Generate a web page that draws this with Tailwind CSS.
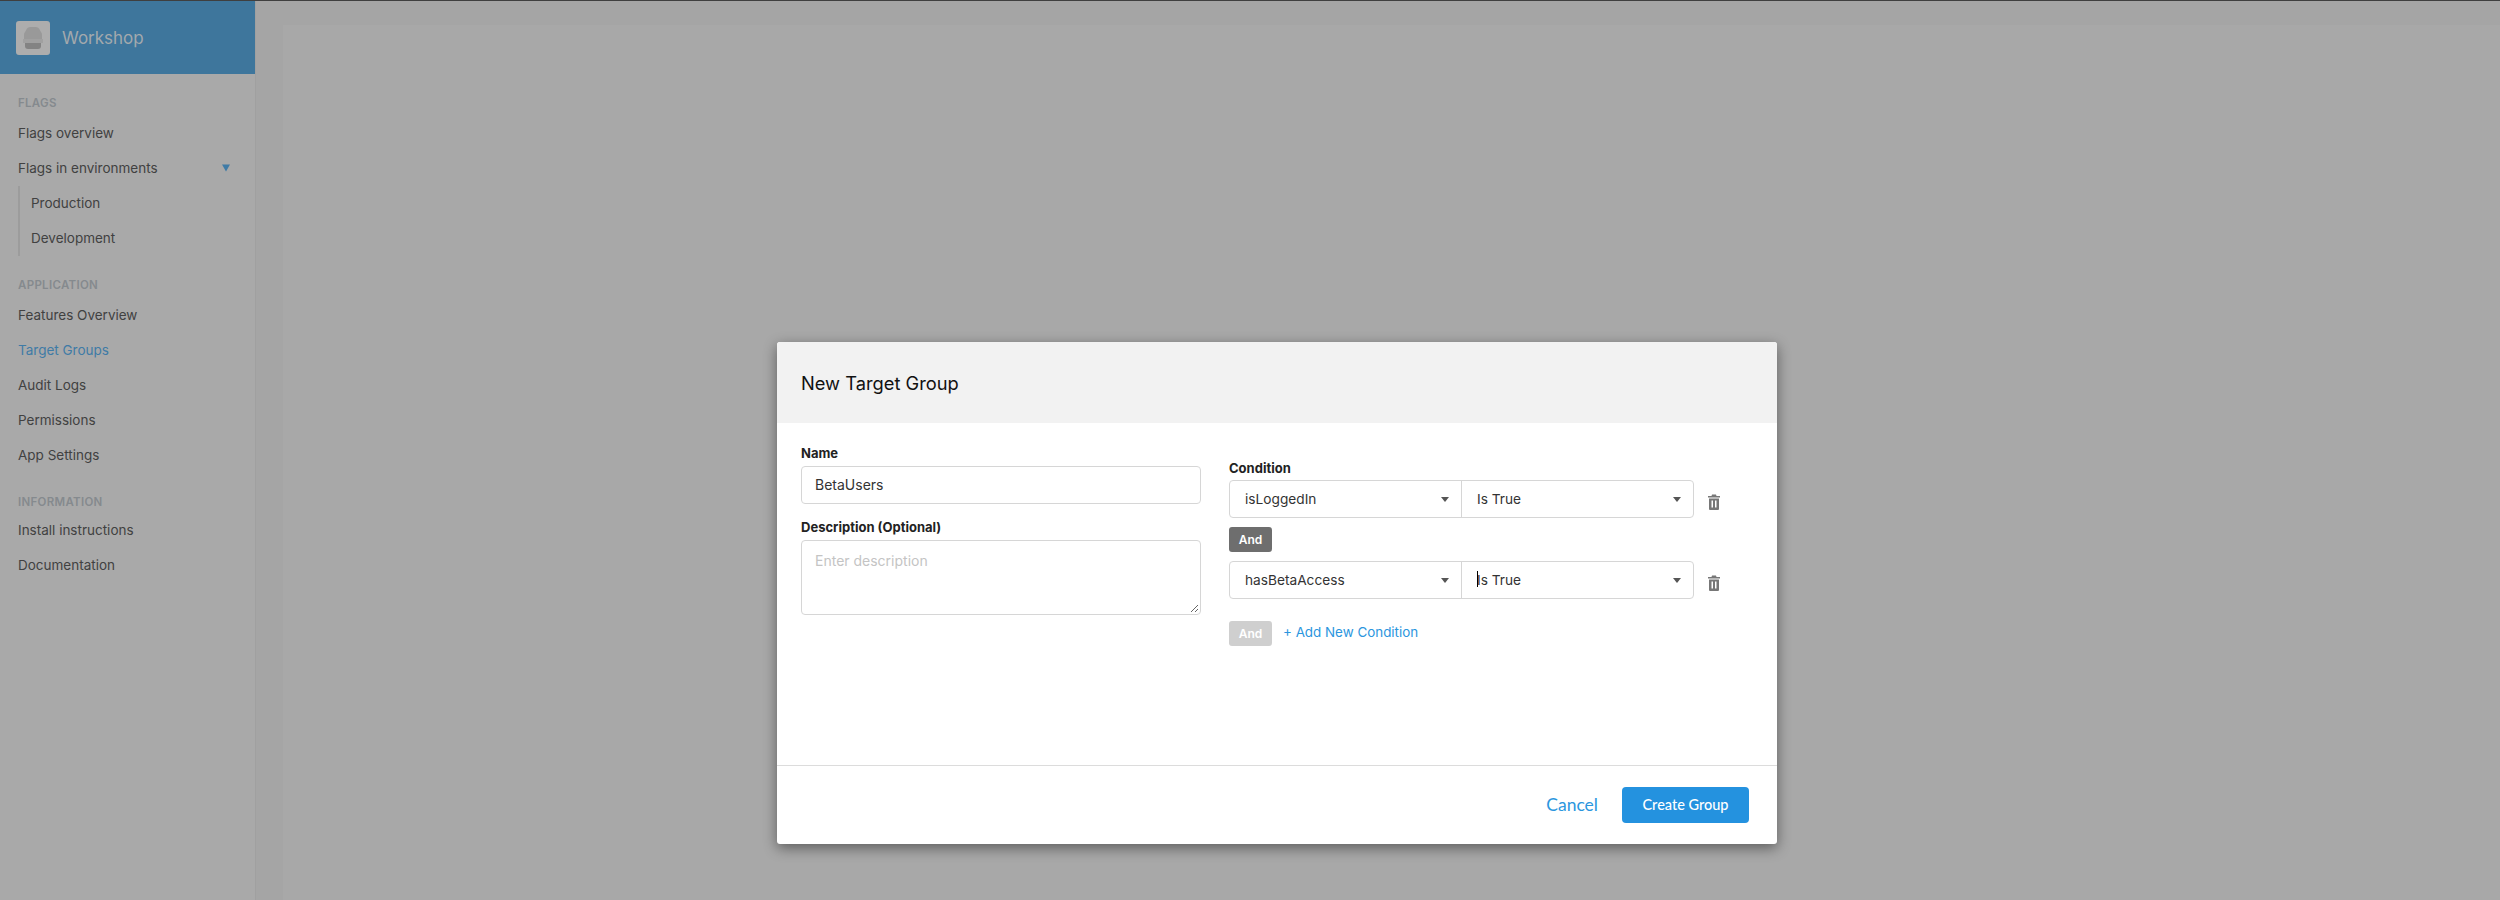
<!DOCTYPE html>
<html>
<head>
<meta charset="utf-8">
<script src="https://cdn.jsdelivr.net/npm/@tailwindcss/browser@4"></script>
</head>
<body class="m-0">
<div class="relative w-[2500px] h-[900px] overflow-hidden flex flex-col bg-[#a7a7a7] font-['Inter','Liberation_Sans',sans-serif]">
  <div class="h-px shrink-0 bg-[#3f3f3f]"></div>
  <div class="flex flex-1 min-h-0">
    <aside class="w-[256px] shrink-0 flex flex-col bg-[#a9a9a9] border-r border-[#a0a0a0]">
      <div class="h-[73px] shrink-0 flex items-center pl-4 gap-[12px] bg-[#3e769c]">
        <div class="w-[34px] h-[34px] rounded-[3px] bg-[#adadad] flex items-center justify-center">
          <svg width="20" height="22" viewBox="0 0 20 22">
            <path d="M1 12 L1 8 Q1 6 2 5 L4 1.500 Q5 0 7 0 L13 0 Q15 0 16 1.500 L18 5 Q19 6 19 8 L19 12 Z" fill="#999999"/>
            <rect x="0" y="12" width="20" height="4" fill="#a0a0a0"/>
            <path d="M2 16 L18 16 L18 19 Q18 22 15 22 L5 22 Q2 22 2 19 Z" fill="#838383"/>
          </svg>
        </div>
        <span class="text-[17px] text-[#a3a9ad] mt-[2px]">Workshop</span>
      </div>
      <nav class="flex flex-col px-[18px] pt-[20px] text-[13.500px] leading-[35px] text-[#414141]">
        <div class="text-[11.5px] font-semibold tracking-[0.3px] leading-[18px] mb-[3.500px] text-[#858a8e]">FLAGS</div>
        <a class="h-[35px]">Flags overview</a>
        <a class="h-[35px] flex items-center justify-between pr-[6px]">Flags in environments
          <svg width="10" height="8" viewBox="0 0 10 8"><path d="M1 0.500 L9 0.500 L5 7.500 Z" fill="#3f7ba6"/></svg>
        </a>
        <div class="border-l-2 border-[#9c9c9c] pl-[11px]">
          <a class="block h-[35px]">Production</a>
          <a class="block h-[35px]">Development</a>
        </div>
        <div class="text-[11.5px] font-semibold tracking-[0.3px] leading-[18px] mt-[20.500px] mb-[3.500px] text-[#858a8e]">APPLICATION</div>
        <a class="h-[35px]">Features Overview</a>
        <a class="h-[35px] text-[#3f7ba6]">Target Groups</a>
        <a class="h-[35px]">Audit Logs</a>
        <a class="h-[35px]">Permissions</a>
        <a class="h-[35px]">App Settings</a>
        <div class="text-[11.5px] font-semibold tracking-[0.3px] leading-[18px] mt-[20px] mb-[2px] text-[#858a8e]">INFORMATION</div>
        <a class="h-[35px]">Install instructions</a>
        <a class="h-[35px]">Documentation</a>
      </nav>
    </aside>
    <main class="flex-1 flex flex-col">
      <div class="h-[24px] bg-[#a5a5a5]"></div>
      <div class="flex flex-1">
        <div class="w-[27px] bg-[#a5a5a5]"></div>
        <div class="flex-1 bg-[#a8a8a8]"></div>
      </div>
    </main>
  </div>

  <div class="absolute inset-0 flex items-start pl-[777px] pt-[342px]">
    <div class="w-[1000px] h-[502px] flex flex-col bg-white rounded-[3px] overflow-hidden shadow-[0_4px_14px_rgba(0,0,0,0.45)]">
      <div class="h-[81px] shrink-0 flex items-center px-6 pt-[2px] bg-[#f2f2f2]">
        <h2 class="text-[18.300px] text-[#111] leading-none">New Target Group</h2>
      </div>
      <div class="flex-1 flex px-6 gap-7">
        <div class="w-[400px] shrink-0 flex flex-col pt-[22px]">
          <label class="text-[13px] font-bold leading-[16px] mb-[5px] text-[#222]">Name</label>
          <div class="h-[38px] flex items-center px-[13px] pb-[2px] border border-[#d6d6d6] rounded-[4px] text-[14px] text-[#333]">BetaUsers</div>
          <label class="text-[13px] font-bold leading-[16px] mt-[15px] mb-[5px] text-[#222]">Description (Optional)</label>
          <div class="relative h-[75px] px-[13px] pt-[10px] border border-[#d6d6d6] rounded-[4px] text-[14px] leading-[20px] text-[#c4c4c4]">Enter description
            <svg class="absolute right-px bottom-px" width="9" height="9" viewBox="0 0 9 9"><path d="M1 8 L8 1 M5 8 L8 5" stroke="#666" stroke-width="1" fill="none"/></svg>
          </div>
        </div>
        <div class="flex-1 flex flex-col pt-[37px]">
          <label class="text-[13px] font-bold leading-[16px] mb-[4px] text-[#222]">Condition</label>
          <div class="flex items-center">
            <div class="w-[465px] h-[38px] flex border border-[#d6d6d6] rounded-[4px] text-[13.700px] text-[#333]">
              <div class="w-[232px] flex items-center justify-between pl-[15px] pr-[12px] border-r border-[#d6d6d6]">isLoggedIn
                <svg width="8" height="5" viewBox="0 0 8 5"><path d="M0 0 L8 0 L4 5 Z" fill="#555"/></svg>
              </div>
              <div class="flex-1 flex items-center justify-between pl-[15px] pr-[12px]">Is True
                <svg width="8" height="5" viewBox="0 0 8 5"><path d="M0 0 L8 0 L4 5 Z" fill="#555"/></svg>
              </div>
            </div>
            <svg class="ml-[14px] mt-[5px]" width="12" height="16" viewBox="0 0 12 16"><path d="M4 0.500 H8 L8.500 2 H12 V3.500 H0 V2 H3.500 Z M1 4.500 H11 V15 Q11 16 10 16 H2 Q1 16 1 15 Z M3.500 6.500 V13.500 H5 V6.500 Z M7 6.500 V13.500 H8.500 V6.500 Z" fill-rule="evenodd" fill="#777"/></svg>
          </div>
          <div class="w-[43px] h-[25px] my-[9px] flex items-center justify-center rounded-[3px] bg-[#6e6e6e] text-white text-[12px] font-semibold">And</div>
          <div class="flex items-center">
            <div class="w-[465px] h-[38px] flex border border-[#d6d6d6] rounded-[4px] text-[13.700px] text-[#333]">
              <div class="w-[232px] flex items-center justify-between pl-[15px] pr-[12px] border-r border-[#d6d6d6]">hasBetaAccess
                <svg width="8" height="5" viewBox="0 0 8 5"><path d="M0 0 L8 0 L4 5 Z" fill="#555"/></svg>
              </div>
              <div class="flex-1 flex items-center justify-between pl-[15px] pr-[12px]"><span class="relative">Is True<span class="absolute left-0 top-[1px] w-px h-[16px] bg-black"></span></span>
                <svg width="8" height="5" viewBox="0 0 8 5"><path d="M0 0 L8 0 L4 5 Z" fill="#555"/></svg>
              </div>
            </div>
            <svg class="ml-[14px] mt-[5px]" width="12" height="16" viewBox="0 0 12 16"><path d="M4 0.500 H8 L8.500 2 H12 V3.500 H0 V2 H3.500 Z M1 4.500 H11 V15 Q11 16 10 16 H2 Q1 16 1 15 Z M3.500 6.500 V13.500 H5 V6.500 Z M7 6.500 V13.500 H8.500 V6.500 Z" fill-rule="evenodd" fill="#777"/></svg>
          </div>
          <div class="flex items-center gap-[11px] mt-[22px]">
            <div class="w-[43px] h-[25px] flex items-center justify-center rounded-[3px] bg-[#cfcfcf] text-white text-[12px] font-semibold">And</div>
            <a class="text-[13.400px] text-[#2b96de] mb-[2px]">+ Add New Condition</a>
          </div>
        </div>
      </div>
      <div class="h-[79px] shrink-0 flex items-center justify-end gap-[24px] pr-[28px] border-t border-[#dcdcdc]">
        <a class="text-[17.500px] text-[#2b96de] font-['Lato',sans-serif]">Cancel</a>
        <button class="w-[127px] h-[36px] rounded-[4px] bg-[#2492df] text-white text-[14.500px] font-medium font-['Lato',sans-serif]">Create Group</button>
      </div>
    </div>
  </div>
</div>
</body>
</html>
